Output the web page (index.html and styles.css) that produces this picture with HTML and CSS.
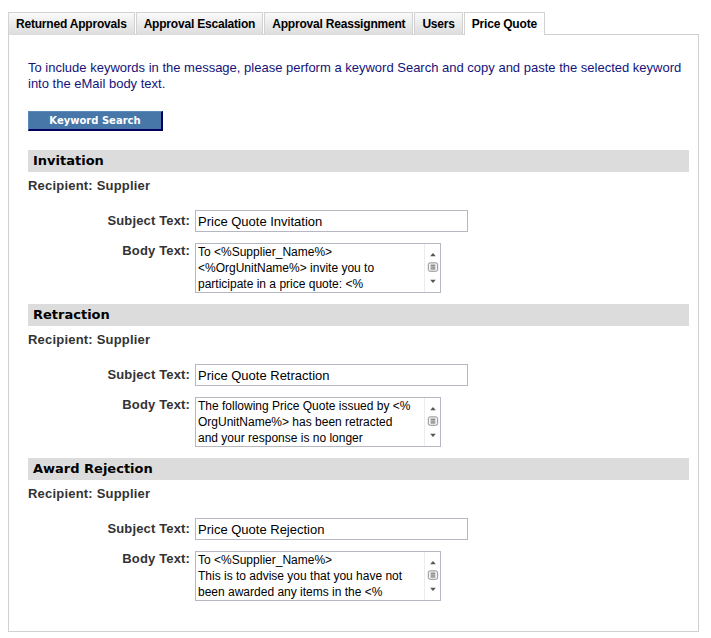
FILE: index.html
```html
<!DOCTYPE html>
<html>
<head>
<meta charset="utf-8">
<link rel="stylesheet" href="styles.css">
</head>
<body>
<div class="tabs">
  <div class="tab">Returned Approvals</div>
  <div class="tab">Approval Escalation</div>
  <div class="tab">Approval Reassignment</div>
  <div class="tab">Users</div>
  <div class="tab active">Price Quote</div>
</div>
<div class="panel">
  <p class="intro">To include keywords in the message, please perform a keyword Search and copy and paste the selected keyword into the eMail body text.</p>
  <button class="kw-btn" type="button">Keyword Search</button>

  <section class="section">
    <h2 class="sec-title">Invitation</h2>
    <div class="recipient">Recipient: Supplier</div>
    <div class="form">
      <label class="lbl">Subject Text:</label>
      <input class="subject" type="text" value="Price Quote Invitation">
      <label class="lbl lbl-top">Body Text:</label>
      <div class="textarea">
        <div class="ta-text">To &lt;%Supplier_Name%&gt;<br>&lt;%OrgUnitName%&gt; invite you to<br>participate in a price quote: &lt;%</div>
        <div class="ta-scroll">
          <svg width="16" height="48" viewBox="0 0 16 48"><path d="M5.5 11.5h6l-3-3.5z" fill="#555"/><rect x="3.5" y="18.5" width="10" height="9" rx="2" fill="#f4f4f4" stroke="#8a8a8a"/><path d="M6 21h5M6 23h5M6 25h5" stroke="#555"/><path d="M5.5 36.5h6l-3 3.5z" fill="#555"/></svg>
        </div>
      </div>
    </div>
  </section>

  <section class="section">
    <h2 class="sec-title">Retraction</h2>
    <div class="recipient">Recipient: Supplier</div>
    <div class="form">
      <label class="lbl">Subject Text:</label>
      <input class="subject" type="text" value="Price Quote Retraction">
      <label class="lbl lbl-top">Body Text:</label>
      <div class="textarea">
        <div class="ta-text">The following Price Quote issued by &lt;%<br>OrgUnitName%&gt; has been retracted<br>and your response is no longer</div>
        <div class="ta-scroll">
          <svg width="16" height="48" viewBox="0 0 16 48"><path d="M5.5 11.5h6l-3-3.5z" fill="#555"/><rect x="3.5" y="18.5" width="10" height="9" rx="2" fill="#f4f4f4" stroke="#8a8a8a"/><path d="M6 21h5M6 23h5M6 25h5" stroke="#555"/><path d="M5.5 36.5h6l-3 3.5z" fill="#555"/></svg>
        </div>
      </div>
    </div>
  </section>

  <section class="section">
    <h2 class="sec-title">Award Rejection</h2>
    <div class="recipient">Recipient: Supplier</div>
    <div class="form">
      <label class="lbl">Subject Text:</label>
      <input class="subject" type="text" value="Price Quote Rejection">
      <label class="lbl lbl-top">Body Text:</label>
      <div class="textarea">
        <div class="ta-text">To &lt;%Supplier_Name%&gt;<br>This is to advise you that you have not<br>been awarded any items in the &lt;%</div>
        <div class="ta-scroll">
          <svg width="16" height="48" viewBox="0 0 16 48"><path d="M5.5 11.5h6l-3-3.5z" fill="#555"/><rect x="3.5" y="18.5" width="10" height="9" rx="2" fill="#f4f4f4" stroke="#8a8a8a"/><path d="M6 21h5M6 23h5M6 25h5" stroke="#555"/><path d="M5.5 36.5h6l-3 3.5z" fill="#555"/></svg>
        </div>
      </div>
    </div>
  </section>
</div>
</body>
</html>
```
FILE: styles.css
```css
* { box-sizing: border-box; }
body {
  margin: 8px;
  background: #fff;
  font-family: "Liberation Sans", Arial, sans-serif;
  color: #000;
}
.tabs {
  display: flex;
  gap: 1px;
  padding-top: 4px;
  height: 27px;
}
.tab {
  height: 23px;
  padding: 0 7px;
  border: 1px solid #d2d2d2;
  border-bottom: none;
  background: linear-gradient(#fafafa, #dcdcdc);
  font-size: 12px;
  font-weight: bold;
  letter-spacing: -0.2px;
  line-height: 22px;
  color: #000;
  white-space: nowrap;
}
.tab.active {
  background: #fff;
  height: 23px;
  position: relative;
  z-index: 1;
}
.panel {
  width: 691px;
  border: 1px solid #d0d0d0;
  padding: 25px 9px 30px 19px;
  margin-top: -1px;
}
.intro {
  margin: 0;
  font-size: 13px;
  line-height: 16px;
  color: #14147a;
}
.kw-btn {
  display: block;
  margin: 19px 0 0;
  width: 135px;
  height: 20px;
  padding: 0;
  background: #4677a8;
  border: 1px solid #5c8ab8;
  border-right: 2px solid #00005e;
  border-bottom: 2px solid #00005e;
  color: #fff;
  font-family: "DejaVu Sans", Verdana, sans-serif;
  font-size: 10px;
  font-weight: bold;
  line-height: 16px;
}
.section { margin-top: 19px; }
.section + .section { margin-top: 11px; }
.sec-title {
  margin: 0;
  height: 22px;
  background: #dcdcdc;
  padding-left: 5px;
  font-family: "DejaVu Sans", Verdana, sans-serif;
  font-size: 13px;
  font-weight: bold;
  line-height: 22px;
  color: #000;
}
.recipient {
  margin-top: 5px;
  font-size: 13px;
  font-weight: bold;
  letter-spacing: 0.2px;
  line-height: 17px;
  color: #333;
}
.form {
  display: grid;
  grid-template-columns: 162px auto;
  column-gap: 5px;
  row-gap: 11px;
  margin-top: 16px;
  align-items: center;
  justify-content: start;
}
.lbl {
  text-align: right;
  font-size: 13px;
  font-weight: bold;
  letter-spacing: 0.15px;
  line-height: 16px;
  color: #333;
}
.lbl-top {
  align-self: start;
  padding-top: 0;
}
.subject {
  width: 273px;
  height: 22px;
  margin: 0;
  padding: 0 2px;
  border: 1px solid #b5b8c0;
  font-family: "Liberation Sans", Arial, sans-serif;
  font-size: 13px;
  color: #000;
  background: #fff;
}
.textarea {
  display: flex;
  width: 246px;
  height: 50px;
  border: 1px solid #b5b8c0;
  background: #fff;
  overflow: hidden;
}
.ta-text {
  flex: 1;
  padding: 0 2px;
  font-size: 12px;
  line-height: 16px;
  color: #000;
  white-space: nowrap;
  overflow: hidden;
}
.ta-scroll {
  width: 16px;
  height: 48px;
  border-left: 1px solid #ececec;
  background: #fff;
  display: flex;
}
.ta-scroll svg { display: block; }
```
